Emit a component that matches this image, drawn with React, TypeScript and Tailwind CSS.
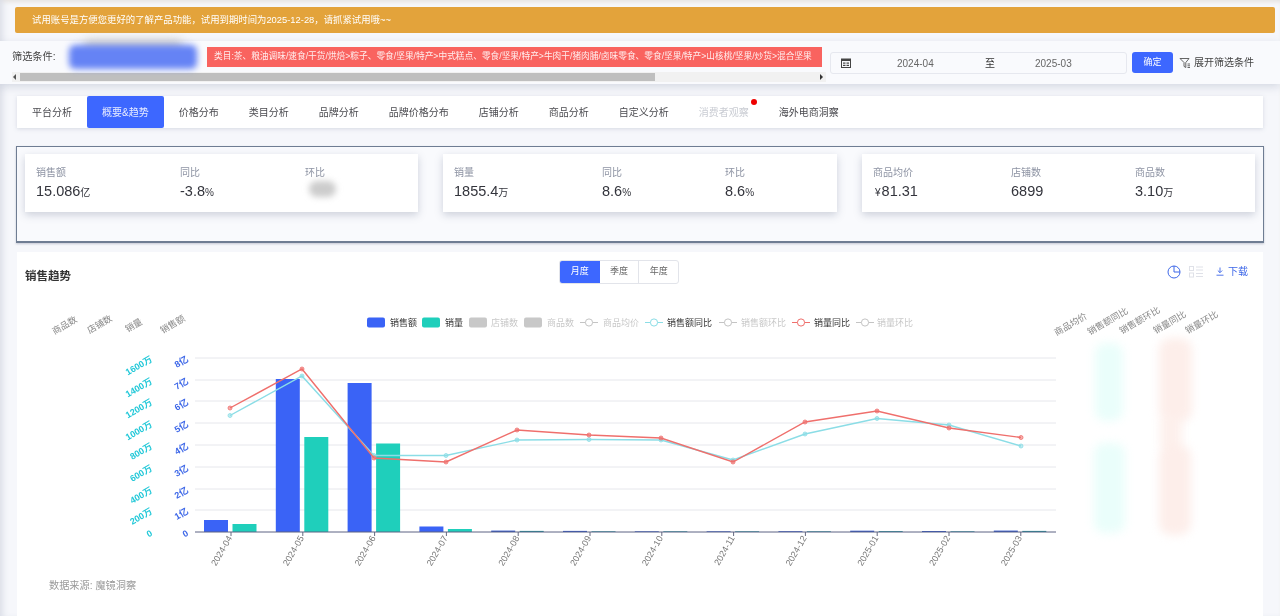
const font = { fontFamily: '"Liberation Sans","Noto Sans CJK SC",sans-serif' };

const tabs = ["平台分析","概要&趋势","价格分布","类目分析","品牌分析","品牌价格分布","店铺分析","商品分析","自定义分析","消费者观察","海外电商洞察"];
const months = ["2024-04","2024-05","2024-06","2024-07","2024-08","2024-09","2024-10","2024-11","2024-12","2025-01","2025-02","2025-03"];
const grid = [358,380,401,423,445,467,489,510];
const blueLabels = ["8亿","7亿","6亿","5亿","4亿","3亿","2亿","1亿","0"];
const tealLabels = ["1600万","1400万","1200万","1000万","800万","600万","400万","200万","0"];
const blueTops = [520,379,383,526.5,530.6,530.9,531.3,531.3,531.2,530.7,531,530.6];
const tealTops = [524,437,443.5,529,530.9,531.3,531.3,531.3,531.3,531.1,531.3,530.9];
const red: [number,number][] = [[230,408],[302,369],[374,458],[446,462],[517,430],[589,435],[661,438],[733,462],[805,422],[877,411],[949,428],[1021,437.5]];
const teal: [number,number][] = [[230,415.5],[302,376],[374,455.5],[446,455.5],[517,440],[589,439.5],[661,440],[733,460],[805,434],[877,418.5],[949,425],[1021,446]];
const topLeft: [string,number,number][] = [["商品数",65,326],["店铺数",100,325],["销量",134,326],["销售额",173,325]];
const topRight: [string,number,number][] = [["商品均价",1071,325],["销售额同比",1108,322],["销售额环比",1140,321],["销量同比",1170,323],["销量环比",1202,323]];

function Pts({ pts, color }: { pts: [number,number][]; color: string }) {
  return (
    <g>
      <polyline points={pts.map((p) => p.join(",")).join(" ")} fill="none" stroke={color} strokeWidth="1.4" />
      {pts.map((p, i) => (
        <circle key={i} cx={p[0]} cy={p[1]} r="2" fill={color} fillOpacity="0.55" stroke={color} strokeWidth="0.8" />
      ))}
    </g>
  );
}

function LegendBar({ x, label, tx, color, on }: { x: number; label: string; tx: number; color: string; on: boolean }) {
  return (
    <g>
      <rect x={x} y="317.5" width="18" height="10" rx="2" fill={color} />
      <text x={tx} y="325.5" fontSize="9" fill={on ? "#333" : "#c8c8c8"}>{label}</text>
    </g>
  );
}

function LegendLine({ x, label, tx, color, on }: { x: number; label: string; tx: number; color: string; on: boolean }) {
  return (
    <g>
      <line x1={x} x2={x + 18} y1="322.5" y2="322.5" stroke={color} strokeWidth="1" />
      <circle cx={x + 9} cy="322.5" r="3.6" fill="#fff" stroke={color} strokeWidth="1" />
      <text x={tx} y="325.5" fontSize="9" fill={on ? "#333" : "#c8c8c8"}>{label}</text>
    </g>
  );
}

function Chart() {
  return (
    <svg className="block" width="1246" height="283" viewBox="17 293 1246 283" style={font}>
      <g className="blur-[5px]">
        <rect x="1095" y="343" width="28" height="78" rx="10" fill="#eafefb" />
        <rect x="1094" y="443" width="31" height="90" rx="10" fill="#eafefb" />
        <rect x="1159" y="338" width="33" height="84" rx="12" fill="#fdeeea" />
        <rect x="1160" y="415" width="22" height="35" rx="6" fill="#fdf0ec" />
        <rect x="1159" y="445" width="32" height="90" rx="12" fill="#fdeeea" />
      </g>
      {grid.map((y) => (
        <line key={y} x1="195" x2="1056" y1={y} y2={y} stroke="#e6e7ec" strokeWidth="1" />
      ))}
      {months.map((m, i) => {
        const bx = 204 + i * 71.8;
        const cx = 231 + i * 71.8;
        const dark = i >= 4;
        return (
          <g key={m}>
            <rect x={bx} y={blueTops[i]} width="24" height={532 - blueTops[i]} fill={dark ? "#2f54c8" : "#3a63f6"} />
            <rect x={bx + 28.5} y={tealTops[i]} width="24" height={532 - tealTops[i]} fill={dark ? "#1f8f98" : "#1fcfbb"} />
            <line x1={cx} x2={cx} y1="532" y2="536" stroke="#666a80" />
            <text transform={`translate(${cx + 1.5} 538) rotate(-60)`} textAnchor="end" fontSize="9" fill="#777">{m}</text>
          </g>
        );
      })}
      <line x1="195" x2="1056" y1="532" y2="532" stroke="#5c6283" strokeWidth="1" />
      <Pts pts={teal} color="#8bdde6" />
      <Pts pts={red} color="#ef6f6c" />
      {blueLabels.map((t, i) => (
        <text key={t} transform={`translate(189 ${i === 8 ? 535 : (grid[i] + 3)}) rotate(-30)`} textAnchor="end" fontSize="9" fontWeight="700" fill="#3d67e8">{t}</text>
      ))}
      {tealLabels.map((t, i) => (
        <text key={t} transform={`translate(153 ${i === 8 ? 535 : (grid[i] + 3)}) rotate(-30)`} textAnchor="end" fontSize="9" fontWeight="700" fill="#22c8d8">{t}</text>
      ))}
      {[...topLeft, ...topRight].map(([t, x, y]) => (
        <text key={t} transform={`translate(${x} ${y}) rotate(-30)`} textAnchor="middle" dominantBaseline="middle" fontSize="9" fill="#888">{t}</text>
      ))}
      <LegendBar x={367} tx={390} label="销售额" color="#3a63f6" on />
      <LegendBar x={422} tx={445} label="销量" color="#1fcfbb" on />
      <LegendBar x={469} tx={491} label="店铺数" color="#c8c8c8" on={false} />
      <LegendBar x={524} tx={547} label="商品数" color="#c8c8c8" on={false} />
      <LegendLine x={580} tx={603} label="商品均价" color="#c4c4c4" on={false} />
      <LegendLine x={645} tx={667} label="销售额同比" color="#8bdde6" on />
      <LegendLine x={719} tx={741} label="销售额环比" color="#c4c4c4" on={false} />
      <LegendLine x={792} tx={814} label="销量同比" color="#ef6f6c" on />
      <LegendLine x={856} tx={877} label="销量环比" color="#c4c4c4" on={false} />
    </svg>
  );
}

function Stat({ label, value, unit, pre, w, blur }: { label: string; value?: string; unit?: string; pre?: string; w: string; blur?: boolean }) {
  return (
    <div className={`${w} flex flex-col`}>
      <div className="h-[14px] text-[10px] leading-[14px] text-[#8d93a3]">{label}</div>
      {blur ? (
        <div className="mt-[1px] ml-[4px] h-[16px] w-[27px] rounded-full bg-[#cccccc] blur-[3px]" />
      ) : (
        <div className="mt-[1px] text-[14.5px] leading-[20px] text-[#33343c]">
          {pre && <span className="ml-[2px] mr-[1px] text-[10px]">{pre}</span>}
          {value}
          <span className="text-[10px]">{unit}</span>
        </div>
      )}
    </div>
  );
}

function Card({ children, cls }: { children: React.ReactNode; cls: string }) {
  return (
    <div className={`${cls} flex h-[58px] bg-white pl-[11px] pt-[12px] shadow-[0_3px_8px_rgba(90,100,130,0.28)]`}>
      {children}
    </div>
  );
}

export default function App() {
  return (
    <div style={font} className="relative h-[616px] w-[1280px] overflow-hidden bg-[#f6f7fb] pt-[7px] shadow-[inset_6px_0_6px_-3px_#dcdfe8,inset_0_4px_4px_-2px_#e8e4e0] blur-[0.5px]">
      <div className="ml-[15px] flex h-[26px] w-[1260px] items-center rounded-[2px] bg-[#e3a33b] pl-[17px] text-[9.4px] text-white">
        试用账号是方便您更好的了解产品功能，试用到期时间为2025-12-28，请抓紧试用哦~~
      </div>

      <div className="mt-[8px] flex h-[43px] items-start bg-[#f9fafd] shadow-[0_3px_8px_rgba(120,130,160,0.25)]">
        <div className="relative w-[826px] shrink-0 pl-[12px] pt-[6px]">
          <div className="flex h-[20px] items-center">
            <span className="w-[57px] text-[10.2px] text-[#444]">筛选条件:</span>
            <div className="relative h-[24px] w-[128px]">
              <div className="absolute -top-[5px] left-[14px] h-[12px] w-[100px] rounded-full bg-[#c8c8c8] blur-[5px]" />
              <div className="absolute inset-0 rounded-[6px] bg-[#6583f5] blur-[3px]" />
            </div>
            <div className="ml-[10px] flex h-[20px] w-[615px] items-center whitespace-nowrap bg-[#f9635f] pl-[7px] text-[8.7px] text-[#ffeeee]">
              类目:茶、粮油调味/速食/干货/烘焙&gt;粽子、零食/坚果/特产&gt;中式糕点、零食/坚果/特产&gt;牛肉干/猪肉脯/卤味零食、零食/坚果/特产&gt;山核桃/坚果/炒货&gt;混合坚果
            </div>
          </div>
          <div className="mt-[5px] flex h-[10px] items-center bg-[#f1f1f1]">
            <span className="ml-[1px] h-0 w-0 border-y-[3px] border-r-[3px] border-y-transparent border-r-[#555]" />
            <div className="ml-[4px] h-[8px] w-[635px] bg-[#bfbfbf]" />
            <span className="ml-auto mr-[3px] h-0 w-0 border-y-[3px] border-l-[3px] border-y-transparent border-l-[#333]" />
          </div>
        </div>
        <div className="ml-[4px] mt-[11px] flex h-[22px] w-[297px] items-center rounded-[3px] border border-[#e6e8ef] bg-[#f9fafd] pl-[10px] text-[10px] text-[#666]">
          <svg width="10" height="10" viewBox="0 0 10 10" className="shrink-0">
            <rect x="0.5" y="1" width="9" height="8.5" fill="none" stroke="#444" />
            <rect x="1" y="1" width="8" height="2" fill="#444" />
            <rect x="2" y="4.5" width="2.5" height="1.2" fill="#444" />
            <rect x="5.5" y="4.5" width="2.5" height="1.2" fill="#444" />
            <rect x="2" y="6.8" width="2.5" height="1.2" fill="#444" />
            <rect x="5.5" y="6.8" width="2.5" height="1.2" fill="#444" />
          </svg>
          <span className="ml-[46px] w-[88px]">2024-04</span>
          <span className="w-[50px] text-[#333]">至</span>
          <span>2025-03</span>
        </div>
        <div className="ml-[5px] mt-[11px] flex h-[21px] w-[41px] items-center justify-center rounded-[3px] bg-[#3d67ff] text-[9px] text-white">确定</div>
        <div className="ml-[6px] mt-[11px] flex h-[21px] items-center text-[10px] text-[#444]">
          <svg width="12" height="12" viewBox="0 0 12 12" fill="none" stroke="#555" strokeWidth="0.9" className="mr-[3px]">
            <path d="M1 1.5h9L6.8 5.5v5L5 9.4V5.5z" />
            <path d="M8.5 7h2.5M8.5 8.8h2.5M8.5 10.5h2.5" />
          </svg>
          展开筛选条件
        </div>
      </div>

      <div className="ml-[17px] mt-[12px] flex h-[32px] w-[1246px] bg-white shadow-[0_1px_4px_rgba(120,130,160,0.25)]">
        {tabs.map((t, i) => (
          <div
            key={t}
            className={`relative flex items-center px-[15px] text-[10px] ${
              i === 1 ? "rounded-[2px] bg-[#3d67ff] text-[#e8ecff]" : i === 9 ? "text-[#c9ccd3]" : "text-[#4a4a4f]"
            }`}
          >
            {t}
            {i === 9 && <span className="absolute right-[7px] top-[3px] h-[6px] w-[6px] rounded-full bg-[#ee0000]" />}
          </div>
        ))}
      </div>

      <div className="ml-[16px] mt-[18px] flex h-[97px] w-[1248px] border border-b-2 border-[#6f7d93] bg-[#f9fafd] pl-[8px] pt-[7px] shadow-[0_1px_2px_rgba(80,90,120,0.3)]">
        <Card cls="w-[393px]">
          <Stat w="w-[144px]" label="销售额" value="15.086" unit="亿" />
          <Stat w="w-[125px]" label="同比" value="-3.8" unit="%" />
          <Stat w="w-[80px]" label="环比" blur />
        </Card>
        <Card cls="ml-[25px] w-[394px]">
          <Stat w="w-[148px]" label="销量" value="1855.4" unit="万" />
          <Stat w="w-[123px]" label="同比" value="8.6" unit="%" />
          <Stat w="w-[80px]" label="环比" value="8.6" unit="%" />
        </Card>
        <Card cls="ml-[25px] w-[393px]">
          <Stat w="w-[138px]" label="商品均价" value="81.31" pre="¥" />
          <Stat w="w-[124px]" label="店铺数" value="6899" />
          <Stat w="w-[80px]" label="商品数" value="3.10" unit="万" />
        </Card>
      </div>

      <div className="ml-[17px] mt-[9px] h-[370px] w-[1246px] bg-white">
        <div className="flex h-[41px] items-start pl-[8px] pt-[8px]">
          <div className="mt-[8px] w-[534px] text-[11.5px] font-bold leading-[16px] text-[#333]">销售趋势</div>
          <div className="flex h-[24px] w-[120px] overflow-hidden rounded-[3px] border border-[#e2e4ea] text-[9px] text-[#666]">
            <div className="flex w-[40px] items-center justify-center bg-[#3d67ff] text-white">月度</div>
            <div className="flex w-[40px] items-center justify-center border-r border-[#e2e4ea]">季度</div>
            <div className="flex w-[39px] items-center justify-center">年度</div>
          </div>
          <div className="ml-[488px] mt-[4px] flex items-center text-[10px] text-[#3d67e8]">
            <svg width="14" height="14" viewBox="0 0 14 14" fill="none" stroke="#3d67e8" strokeWidth="1">
              <circle cx="7" cy="7" r="6" />
              <path d="M7 1v6h6" />
            </svg>
            <svg width="14" height="14" viewBox="0 0 14 14" fill="none" stroke="#dfe1e8" strokeWidth="1" className="ml-[8px]">
              <rect x="0.5" y="1.5" width="4" height="4" />
              <rect x="0.5" y="8" width="4" height="4" />
              <path d="M7 2h7M7 5h7M7 8.5h7M7 11.5h7" />
            </svg>
            <svg width="8" height="9" viewBox="0 0 8 9" fill="none" stroke="#3d67e8" strokeWidth="0.9" className="ml-[13px] mr-[4px]">
              <path d="M4 0.5v5M1.8 3.5L4 5.7l2.2-2.2M0.5 8.2h7" />
            </svg>
            下载
          </div>
        </div>
        <Chart />
        <div className="pl-[32px] pt-[2px] text-[10.2px] text-[#9a9a9a]">数据来源: 魔镜洞察</div>
      </div>
    </div>
  );
}
